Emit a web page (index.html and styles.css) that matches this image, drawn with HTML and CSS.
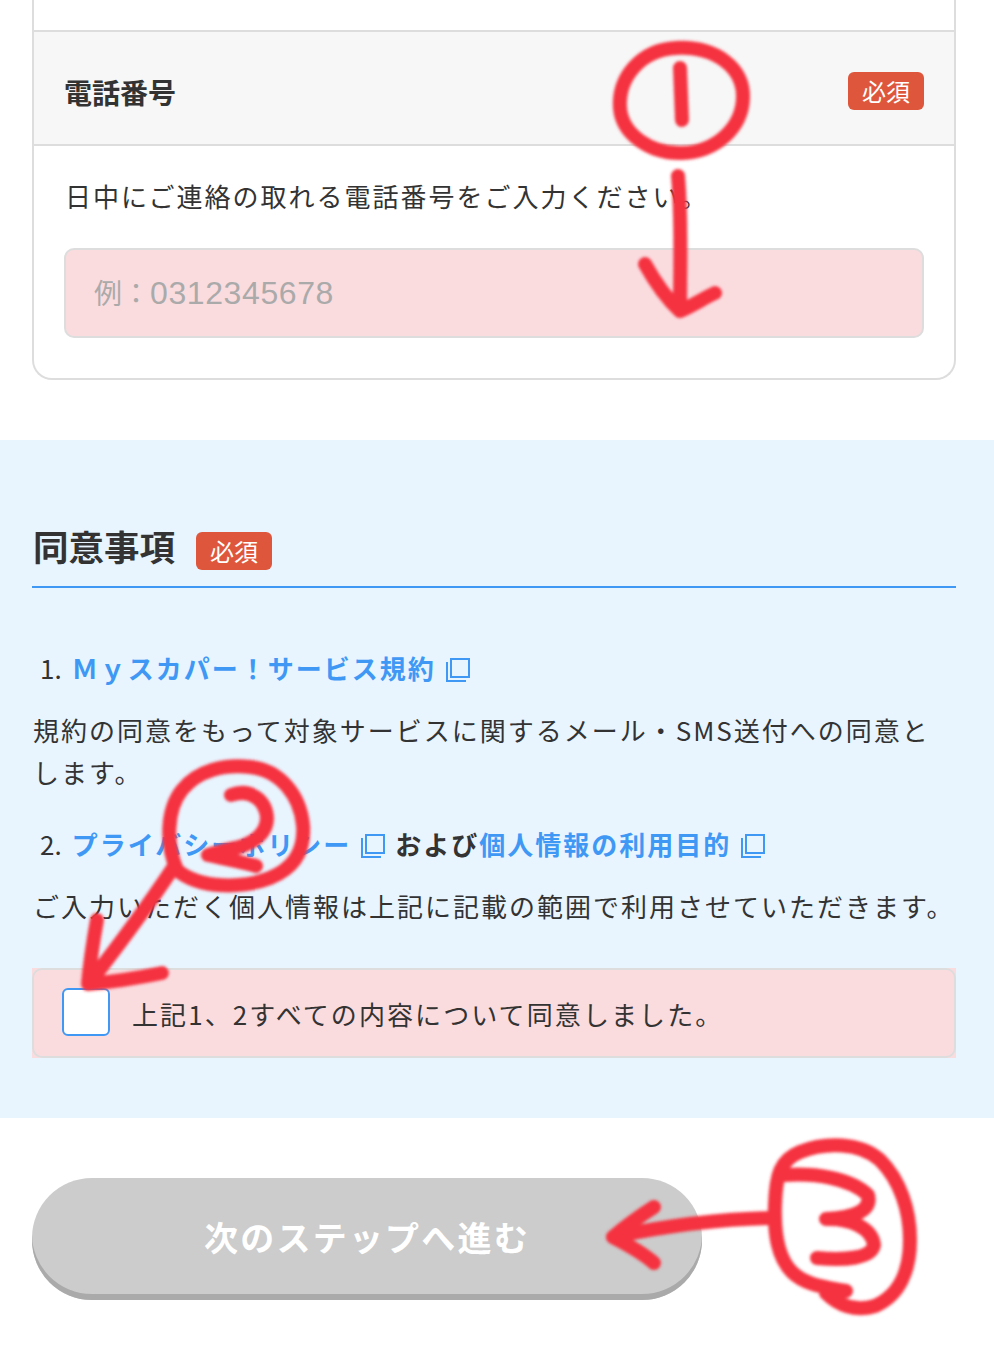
FILE: index.html
```html
<!DOCTYPE html>
<html lang="ja">
<head>
<meta charset="utf-8">
<title>同意事項</title>
<link rel="stylesheet" href="styles.css">
</head>
<body>
<main class="page">
  <section class="card">
    <div class="card-spacer"></div>
    <div class="field-head">
      <span class="field-title">電話番号</span>
      <span class="badge">必須</span>
    </div>
    <div class="field-body">
      <p class="field-note">日中にご連絡の取れる電話番号をご入力ください。</p>
      <div class="input"><span class="placeholder"><span class="placeholder-prefix">例：</span>0312345678</span></div>
    </div>
  </section>

  <section class="agree">
    <div class="agree-head">
      <h2 class="agree-title">同意事項</h2>
      <span class="badge">必須</span>
    </div>
    <p class="term term-first">1.<a class="link">Ｍｙスカパー！サービス規約</a><svg class="ext" viewBox="0 0 24 24"><path d="M5 1h18v18H5zM1 4v19h19" fill="none" stroke="#4098f5" stroke-width="2"/></svg></p>
    <p class="term-note">規約の同意をもって対象サービスに関するメール・SMS送付への同意とします。</p>
    <p class="term term-second">2.<a class="link">プライバシーポリシー</a><svg class="ext" viewBox="0 0 24 24"><path d="M5 1h18v18H5zM1 4v19h19" fill="none" stroke="#4098f5" stroke-width="2"/></svg><b class="and">および</b><a class="link link-plain">個人情報の利用目的</a><svg class="ext" viewBox="0 0 24 24"><path d="M5 1h18v18H5zM1 4v19h19" fill="none" stroke="#4098f5" stroke-width="2"/></svg></p>
    <p class="term-note term-note-single">ご入力いただく個人情報は上記に記載の範囲で利用させていただきます。</p>
    <div class="check-wrap">
      <label class="check-row">
        <span class="checkbox"></span>
        <span class="check-label">上記1、2すべての内容について同意しました。</span>
      </label>
    </div>
  </section>

  <div class="actions">
    <button class="next" type="button">次のステップへ進む</button>
  </div>
</main>

<svg class="scribble" viewBox="0 0 994 1360" aria-hidden="true">
  <defs><filter id="soft" x="-5%" y="-5%" width="110%" height="110%"><feGaussianBlur stdDeviation="1.8"/></filter></defs>
  <g filter="url(#soft)" fill="none" stroke="#f5333f" stroke-width="14" stroke-linecap="round" stroke-linejoin="round">
    <path d="M676 48C640 50 618 78 620 108C622 134 650 154 682 153C716 152 742 128 743 98C744 68 716 46 676 48Z"/>
    <path d="M680 68L682 120"/>
    <path d="M678 176C682 220 680 270 680 310"/>
    <path d="M645 264C655 282 668 300 680 311C692 306 704 298 715 293"/>
    <path d="M177 870C166 845 166 810 182 790C198 770 225 764 250 767C280 770 300 795 303 825C305 850 295 868 270 878C245 888 200 890 177 870Z"/>
    <path d="M231 795C250 788 266 800 267 818C267 835 250 846 230 849C220 851 212 854 208 855C225 859 242 862 256 866"/>
    <path d="M173 868C145 910 115 950 90 982"/>
    <path d="M97 920C93 942 90 962 88 984C112 982 138 978 162 973"/>
    <path d="M846 1291C825 1287 805 1285 792 1272C778 1258 774 1235 775 1205C776 1175 780 1160 800 1152C825 1142 860 1142 880 1160C900 1180 910 1210 910 1240C910 1270 900 1295 875 1306C855 1312 838 1305 826 1293"/>
    <path d="M785 1175C815 1173 850 1178 868 1195C872 1210 855 1218 826 1219C850 1218 872 1228 874 1245C872 1258 845 1261 817 1258"/>
    <path d="M773 1218C720 1219 665 1226 613 1237"/>
    <path d="M654 1207C640 1216 626 1226 613 1237C626 1244 642 1252 654 1263"/>
  </g>
</svg>
</body>
</html>
```

FILE: styles.css
```css
* { box-sizing: border-box; }
html, body { margin: 0; padding: 0; background: #fff; }
body {
  position: relative;
  height: 1360px;
  overflow: hidden;
  font-family: "Noto Sans CJK JP", "Noto Sans", sans-serif;
  color: #333;
}
p, h2 { margin: 0; }

.card {
  margin: 0 38px 0 32px;
  border: 2px solid #ddd;
  border-top: 0;
  border-radius: 0 0 20px 20px;
  height: 380px;
}
.card-spacer { height: 30px; }
.field-head {
  height: 116px;
  display: flex;
  align-items: center;
  justify-content: space-between;
  padding: 0 30px;
  background: #f7f7f7;
  border-top: 2px solid #ddd;
  border-bottom: 2px solid #ddd;
}
.field-title { font-size: 28px; font-weight: 700; line-height: 40px; margin-top: 8px; }
.badge {
  display: inline-flex;
  align-items: center;
  justify-content: center;
  width: 76px;
  height: 38px;
  border-radius: 6px;
  background: #de573c;
  color: #fff;
  font-size: 24px;
  line-height: 1;
}
.field-head .badge { margin-top: 6px; }
.field-body { padding: 30px 30px 0 31px; }
.field-note { font-size: 26px; line-height: 40px; letter-spacing: 2px; }
.input {
  margin: 32px 0 0 -1px;
  height: 90px;
  display: flex;
  align-items: center;
  padding: 2px 28px 0;
  background: #fadcdf;
  border: 2px solid #ddd;
  border-radius: 10px;
}
.placeholder {
  font-family: "Liberation Sans", "Noto Sans CJK JP", sans-serif;
  font-size: 32px;
  letter-spacing: 0.6px;
  color: #aaa;
  line-height: 40px;
}
.placeholder-prefix { font-size: 28px; letter-spacing: 0; }

.agree {
  margin-top: 60px;
  height: 678px;
  padding: 0 38px 0 32px;
  background: #e8f5ff;
}
.agree-head {
  height: 148px;
  display: flex;
  align-items: center;
  gap: 20px;
  padding-top: 70px;
  border-bottom: 2px solid #4098f5;
}
.agree-title { width: 144px; font-size: 35.5px; font-weight: 700; line-height: 50px; margin-top: -4px; margin-left: 1px; margin-right: -1px; white-space: nowrap; }
.agree-head .badge { margin-top: 6px; }

.term { font-size: 26px; line-height: 40px; padding-left: 8px; white-space: nowrap; }
.term-first { margin-top: 60px; }
.term-second { margin-top: 31px; }
.link { color: #4098f5; font-weight: 700; letter-spacing: 2px; margin-left: 10px; }
.link-plain { margin-left: 0; }
.and { font-weight: 700; letter-spacing: 2px; margin-left: 10px; }
.ext { width: 24px; height: 24px; vertical-align: -3px; margin-left: 10px; }
.term-note { font-size: 26px; line-height: 42px; letter-spacing: 2px; margin: 21px 0 0 1px; }
.term-note-single { margin-top: 21px; }

.check-wrap {
  margin-top: 41px;
  background: #fadcdf;
}
.check-row {
  height: 90px;
  display: flex;
  align-items: center;
  gap: 22px;
  padding-left: 28px;
  border: 2px solid #ddd;
  border-radius: 10px;
}
.checkbox {
  width: 48px;
  height: 48px;
  margin-top: -2px;
  background: #fff;
  border: 2px solid #4098f5;
  border-radius: 6px;
}
.check-label { font-size: 26px; line-height: 40px; letter-spacing: 2.1px; margin-top: 2px; }

.actions { padding: 60px 32px 0; }
.next {
  display: block;
  width: 670px;
  height: 122px;
  padding: 0 0 6px;
  border: 0;
  border-radius: 60px;
  background: #ccc;
  box-shadow: inset 0 -6px 0 #aaa;
  color: #fff;
  font-family: inherit;
  font-size: 34px;
  font-weight: 700;
  letter-spacing: 2.2px;
}

.scribble {
  position: absolute;
  left: 0;
  top: 0;
  width: 994px;
  height: 1360px;
  pointer-events: none;
}
```
